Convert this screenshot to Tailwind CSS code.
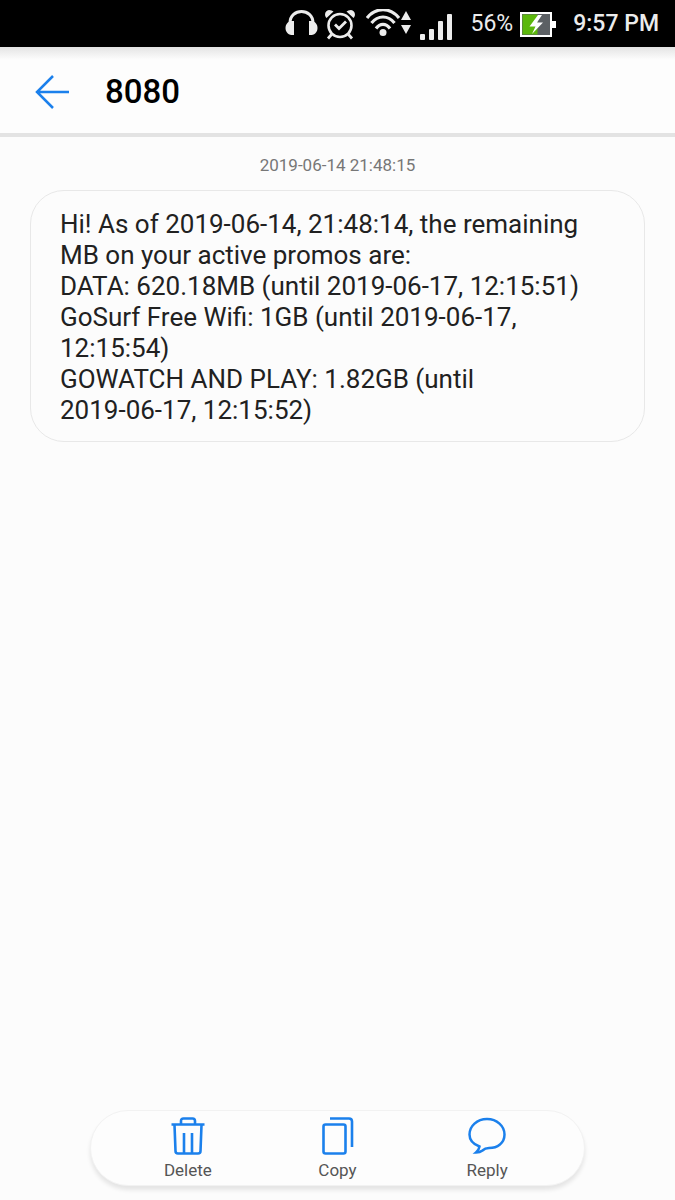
<!DOCTYPE html>
<html lang="en">
<head>
  <meta charset="UTF-8">
  <meta name="viewport" content="width=device-width, initial-scale=1">
  <title>8080</title>
  <script src="https://cdn.jsdelivr.net/npm/@tailwindcss/browser@4"></script>
</head>
<body class="min-h-screen flex flex-col bg-[#fcfcfc] font-[Roboto,'Liberation_Sans',sans-serif]">

  <!-- Status bar -->
  <div class="h-[47px] bg-black text-[#ececec] text-[23px] flex items-center justify-end pr-4 pt-0.5">
    <svg class="w-[34px] h-8 mr-[5px]" viewBox="0 0 34 32" fill="none">
      <path d="M5 14C5 -1.500 28 -1.500 28 14" stroke="#ececec" stroke-width="3"/>
      <path d="M9 12v14H6.500C-1.500 25 -1.500 13 6.500 12zM24 12v14h2.500c8-1 8-13 0-14z" fill="#ececec"/>
    </svg>
    <svg class="w-8 h-8 mr-2.5" viewBox="0 0 32 32" fill="none" stroke="#ececec">
      <circle cx="16" cy="16.500" r="11.500" stroke-width="2.600"/>
      <path d="M11 15.500l4 4 7-7" stroke-width="2.800"/>
      <path d="M7.500 25.500l-3.500 4M24.500 25.500l3.500 4" stroke-width="2.800"/>
      <path d="M2.500 9C-0.500 6 1.500 1 5 1Q8 1 9.500 2.500zM29.500 9C32.500 6 30.500 1 27 1Q24 1 22.500 2.500z" fill="#ececec" stroke="none"/>
    </svg>
    <svg class="w-[46px] h-8 mr-2" viewBox="0 2 46 32" fill="none">
      <path d="M1 11C10 0 24 0 33 11M5.500 16C12 8 22 8 28.500 16M10 21.500C14 16 20 16 24 21.500" stroke="#ececec" stroke-width="3.200"/>
      <circle cx="17" cy="25.500" r="3.500" fill="#ececec"/>
      <path d="M40 4l5 9H35zM35 18h10l-5 9z" fill="#ececec"/>
    </svg>
    <svg class="w-8 h-8 mr-[19px]" viewBox="0 0 32 32" fill="#ececec">
      <rect x="0" y="25" width="5" height="6" rx="1"/>
      <rect x="9" y="20" width="5" height="11" rx="1"/>
      <rect x="18" y="12" width="5" height="19" rx="1"/>
      <rect x="27" y="5" width="5" height="26" rx="1"/>
    </svg>
    <span class="mr-[7px]">56%</span>
    <svg class="w-9 h-[26px] mr-[17px]" viewBox="0 0 36 26">
      <rect x="1" y="1" width="30" height="23" fill="#5c6064" stroke="#fff" stroke-width="2"/>
      <rect x="2.500" y="2.500" width="15" height="20" fill="#5cb80c"/>
      <path d="M31 9h5v7h-5z" fill="#fff"/>
      <path d="M18 3L9.500 14.500h6L12 22l11-11.500h-6L22 3z" fill="#fff"/>
    </svg>
    <span class="font-medium">9:57 PM</span>
  </div>

  <!-- Header -->
  <header class="h-[90px] flex items-center pl-[35px] pt-1 gap-9 border-b-4 border-[#e3e3e3] bg-linear-to-b from-[#e4e4e4] to-[#fdfdfd] to-15%">
    <button type="button" aria-label="Back">
      <svg class="block w-[34px] h-[34px]" viewBox="0 0 34 34" fill="none" stroke="#1b80ec" stroke-width="2.500">
        <path d="M34 17H2M18 1L2 17l16 16"/>
      </svg>
    </button>
    <h1 class="text-[33px] font-medium text-black">8080</h1>
  </header>

  <!-- Conversation -->
  <main class="flex-1 px-[30px]">
    <p class="pt-4 pb-[13px] text-center text-[17px] leading-6 text-[#777]">2019-06-14 21:48:15</p>
    <div class="border border-[#e8e8e8] rounded-[34px] px-[29px] pt-[18px] pb-[15px] text-[26px] leading-[31px] text-[#212121]">
      Hi! As of 2019-06-14, 21:48:14, the remaining MB on your active promos are:<br>
      DATA: 620.18MB (until 2019-06-17, 12:15:51)<br>
      GoSurf Free Wifi: 1GB (until 2019-06-17, 12:15:54)<br>
      GOWATCH AND PLAY: 1.82GB (until <span class="whitespace-nowrap">2019-06-17,</span> 12:15:52)
    </div>
  </main>

  <!-- Message actions -->
  <nav class="mx-[90px] mb-3.5 h-[76px] px-[22px] grid grid-cols-3 rounded-full bg-[#fdfdfd] border border-[#f2f2f2] shadow-[0_4px_4px_#00000018] text-[17px] leading-5 text-[#555]">
    <button type="button" class="flex flex-col items-center gap-1 pt-[5px]">
      <svg class="w-10 h-10" viewBox="0 0 40 40" fill="none" stroke="#1b80ec" stroke-width="2.600">
        <path d="M3.500 8.500h33M13 8V5q0-2.500 2.500-2.500h9Q27 2.500 27 5v3M6.500 9l1 26q0 2.500 2.500 2.500h20Q32.500 37.500 32.500 35L33.500 9M16 17v20M24 17v20"/>
      </svg>
      <span>Delete</span>
    </button>
    <button type="button" class="flex flex-col items-center gap-1 pt-[5px]">
      <svg class="w-10 h-10" viewBox="0 0 40 40" fill="none" stroke="#1b80ec" stroke-width="2.600">
        <rect x="6.500" y="8.500" width="22" height="29" rx="2"/>
        <path d="M13 2.500h19q3 0 3 3V31"/>
      </svg>
      <span>Copy</span>
    </button>
    <button type="button" class="flex flex-col items-center gap-1 pt-[5px]">
      <svg class="w-10 h-10" viewBox="0 0 40 40" fill="none" stroke="#1b80ec" stroke-width="2.500">
        <path d="M12.500 30.500C5.500 28 2.500 23.500 2.500 18.500C2.500 10 10 3 20 3S37.500 10 37.500 18.500C37.500 27 30.500 32 22 32Q18 32 15.500 34.500Q13 36.500 9 36.500Q12 34 12.500 30.500Z"/>
      </svg>
      <span>Reply</span>
    </button>
  </nav>

</body>
</html>
